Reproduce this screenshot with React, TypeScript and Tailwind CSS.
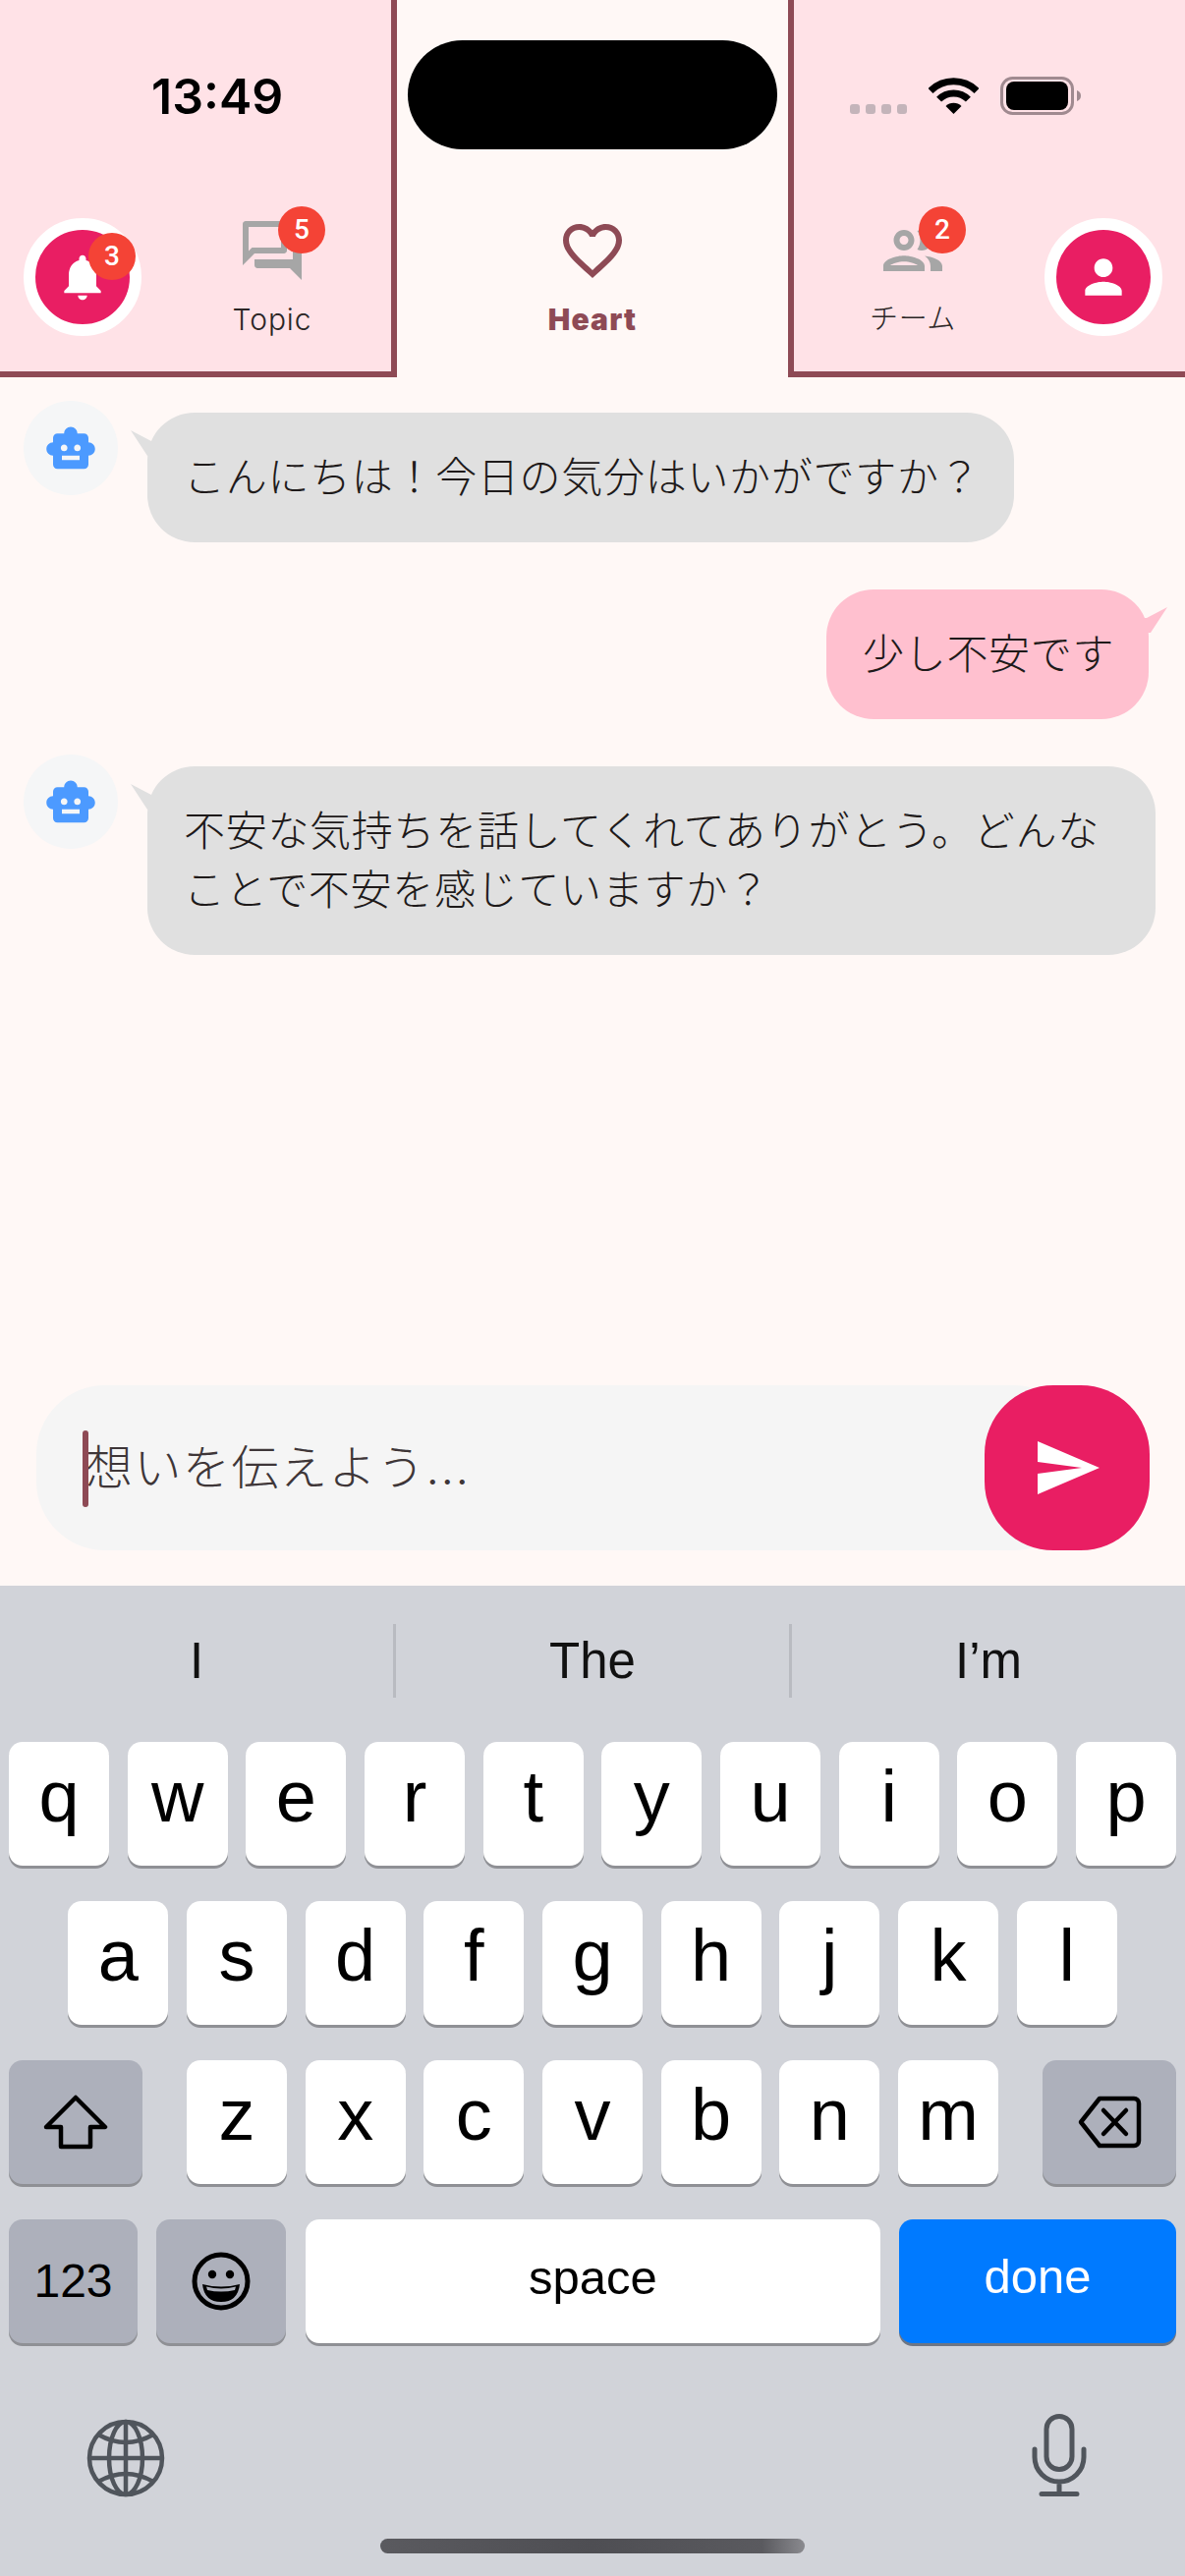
import React from "react";

const CJK = "font-['Inter','Noto_Sans_CJK_JP',sans-serif]";

function Mi({ d, size, color, className = "" }: { d: string; size: number; color: string; className?: string }) {
  return (
    <svg width={size} height={size} viewBox="0 0 24 24" fill={color} className={className}>
      <path d={d} />
    </svg>
  );
}

const P = {
  forum: "M15 4v7H5.17l-.59.59-.58.58V4h11m1-2H3c-.55 0-1 .45-1 1v14l4-4h10c.55 0 1-.45 1-1V3c0-.55-.45-1-1-1zm5 4h-2v9H6v2c0 .55.45 1 1 1h11l4 4V7c0-.55-.45-1-1-1z",
  heart: "M16.5 3c-1.74 0-3.41.81-4.5 2.09C10.91 3.81 9.24 3 7.5 3 4.42 3 2 5.42 2 8.5c0 3.78 3.4 6.86 8.55 11.54L12 21.35l1.45-1.32C18.6 15.36 22 12.28 22 8.5 22 5.42 19.58 3 16.5 3zm-4.4 15.55l-.1.1-.1-.1C7.14 14.24 4 11.39 4 8.5 4 6.5 5.5 5 7.5 5c1.54 0 3.04.99 3.57 2.36h1.87C13.46 5.99 14.96 5 16.5 5c2 0 3.5 1.5 3.5 3.5 0 2.89-3.14 5.74-7.9 10.05z",
  group: "M9 13.75c-2.34 0-7 1.17-7 3.5V19h14v-1.75c0-2.33-4.66-3.5-7-3.5zM4.34 17c.84-.58 2.87-1.25 4.66-1.25s3.82.67 4.66 1.25H4.34zM9 12c1.93 0 3.5-1.57 3.5-3.5S10.93 5 9 5 5.5 6.57 5.5 8.5 7.07 12 9 12zm0-5c.83 0 1.5.67 1.5 1.5S9.83 10 9 10s-1.5-.67-1.5-1.5S8.17 7 9 7zm7.04 6.81c1.16.84 1.96 1.96 1.96 3.44V19h4v-1.75c0-2.02-3.5-3.17-5.96-3.44zM15 12c1.93 0 3.5-1.57 3.5-3.5S16.93 5 15 5c-.54 0-1.04.13-1.5.35.63.89 1 1.98 1 3.15s-.37 2.26-1 3.15c.46.22.96.35 1.5.35z",
  bell: "M12 22c1.1 0 2-.9 2-2h-4c0 1.1.89 2 2 2zm6-6v-5c0-3.07-1.64-5.64-4.5-6.32V4c0-.83-.67-1.5-1.5-1.5s-1.5.67-1.5 1.5v.68C7.63 5.36 6 7.92 6 11v5l-2 2v1h16v-1l-2-2z",
  person: "M12 12c2.21 0 4-1.79 4-4s-1.79-4-4-4-4 1.79-4 4 1.79 4 4 4zm0 2c-2.67 0-8 1.34-8 4v2h16v-2c0-2.66-5.33-4-8-4z",
  robot: "M20 9V7c0-1.1-.9-2-2-2h-3c0-1.66-1.34-3-3-3S9 3.34 9 5H6c-1.1 0-2 .9-2 2v2c-1.66 0-3 1.34-3 3s1.34 3 3 3v4c0 1.1.9 2 2 2h12c1.1 0 2-.9 2-2v-4c1.66 0 3-1.34 3-3s-1.34-3-3-3zM7.5 11.5c0-.83.67-1.5 1.5-1.5s1.5.67 1.5 1.5S9.83 13 9 13s-1.5-.67-1.5-1.5zM16 17H8v-2h8v2zm-1-4c-.83 0-1.5-.67-1.5-1.5S14.17 10 15 10s1.5.67 1.5 1.5S15.83 13 15 13z",
  send: "M2.01 21L23 12 2.01 3 2 10l15 2-15 2z",
};

function Badge({ n, className }: { n: number; className: string }) {
  return (
    <div className={`absolute w-[48px] h-[48px] rounded-full bg-[#F44336] text-white flex items-center justify-center text-[28px] font-medium font-['Roboto',sans-serif] ${className}`}>
      {n}
    </div>
  );
}

function Round({ d, children }: { d: string; children?: React.ReactNode }) {
  return (
    <div className="relative w-[120px] h-[120px] rounded-full border-[12px] border-white bg-[#E91E63] flex items-center justify-center shrink-0">
      <Mi d={d} size={56} color="#fff" />
      {children}
    </div>
  );
}

function Avatar() {
  return (
    <div className="w-[96px] h-[96px] rounded-full bg-[#F5F6F7] flex items-center justify-center shrink-0">
      <Mi d={P.robot} size={54} color="#4C9AFF" className="mt-[2px]" />
    </div>
  );
}

function BotMessage({ text, width, className = "" }: { text: string; width: string; className?: string }) {
  return (
    <div className={`flex items-start pl-[24px] ${className}`}>
      <Avatar />
      <div className={`relative mt-[12px] ml-[30px] pl-[37px] pr-[30px] py-[36px] rounded-[48px] bg-[#E0E0E0] text-[42px] leading-[60px] tracking-[0.7px] text-[#1E1A1A] font-light ${width}`}>
        <svg width="30" height="30" viewBox="0 0 30 30" className="absolute left-[-17px] top-[17px]">
          <polygon points="0,1 21,12 30,12 30,27 17,27" fill="#E0E0E0" />
        </svg>
        {text}
      </div>
    </div>
  );
}

function Key({ label, className = "", text = "text-[74px] pb-[16px]" }: { label: React.ReactNode; className?: string; text?: string }) {
  return (
    <div className={`h-[126px] rounded-[14px] bg-white shadow-[0_3px_0_#8F9095] flex items-center justify-center text-black ${text} ${className}`}>
      {label}
    </div>
  );
}

function Letters({ keys, className = "" }: { keys: string; className?: string }) {
  return (
    <div className={`flex justify-center gap-[18.67px] ${className}`}>
      {keys.split("").map((k) => (
        <Key key={k} label={k} className="w-[102px]" />
      ))}
    </div>
  );
}

export default function App() {
  return (
    <div className={`relative w-[1206px] h-[2622px] bg-[#FFF8F6] flex flex-col overflow-hidden ${CJK}`}>
      {/* dynamic island */}
      <div className="absolute left-[415px] top-[41px] w-[376px] h-[111px] rounded-[56px] bg-black" />

      {/* header */}
      <header className="flex h-[384px] shrink-0">
        <div className="w-[404px] bg-[#FFE2E7] border-r-[6px] border-b-[6px] border-[#8E4A55]">
          <div className="h-[219px] pt-[74px] pl-[154px] text-[50px] leading-[48px] font-semibold text-black">13:49</div>
          <div className="flex items-start">
            <div className="ml-[24px] mt-[3px]">
              <Round d={P.bell}>
                <Badge n={3} className="left-[54px] top-[3px]" />
              </Round>
            </div>
            <div className="ml-[97px] w-[72px] flex flex-col items-center">
              <div className="relative w-[72px] h-[72px]">
                <Mi d={P.forum} size={72} color="#A6A6A6" />
                <Badge n={5} className="left-[42px] top-[-9px]" />
              </div>
              <div className="mt-[14px] text-[30px] leading-[40px] whitespace-nowrap text-[#2B2626] font-light tracking-[0.9px]">Topic</div>
            </div>
          </div>
        </div>

        <div className="flex-1 pt-[219px] flex flex-col items-center">
          <Mi d={P.heart} size={72} color="#8E4A55" />
          <div className="mt-[14px] text-[30px] leading-[40px] font-black text-[#8E4A55] tracking-[1.2px]">Heart</div>
        </div>

        <div className="w-[404px] bg-[#FFE2E7] border-l-[6px] border-b-[6px] border-[#8E4A55]">
          <div className="h-[219px] flex items-start">
            <div className="ml-[57px] mt-[106px] flex gap-[6px]">
              {[0, 1, 2, 3].map((i) => (
                <div key={i} className="w-[10px] h-[10px] rounded-[3px] bg-[#C4B4BA]" />
              ))}
            </div>
            <svg width="51" height="37" viewBox="0 0 51 37" className="ml-[22px] mt-[79px]">
              <g fill="none" stroke="#000" strokeWidth="7">
                <path d="M2 13.5 A33.5 33.5 0 0 1 49 13.5" />
                <path d="M10.6 22.1 A21 21 0 0 1 40.4 22.1" />
              </g>
              <path d="M25.5 37 L17.5 29 A11.3 11.3 0 0 1 33.5 29 Z" fill="#000" />
            </svg>
            <svg width="82" height="39" viewBox="0 0 82 39" className="ml-[22px] mt-[78px]">
              <rect x="1.5" y="1.5" width="72" height="36" rx="11" fill="none" stroke="#A08A90" strokeWidth="3" />
              <rect x="6" y="5" width="63" height="29" rx="8" fill="#000" />
              <path d="M78 14 C81 15 82 17 82 19.5 C82 22 81 24 78 25 Z" fill="#A08A90" />
            </svg>
          </div>
          <div className="flex items-start">
            <div className="ml-[85px] w-[72px] flex flex-col items-center">
              <div className="relative w-[72px] h-[72px]">
                <Mi d={P.group} size={72} color="#A6A6A6" />
                <Badge n={2} className="left-[42px] top-[-9px]" />
              </div>
              <div className="mt-[14px] text-[29px] leading-[40px] whitespace-nowrap text-[#2B2626] font-light tracking-[0.6px]">チーム</div>
            </div>
            <div className="ml-[98px] mt-[3px]">
              <Round d={P.person} />
            </div>
          </div>
        </div>
      </header>

      {/* messages */}
      <main className="flex-1 pt-[24px]">
        <BotMessage text="こんにちは！今日の気分はいかがですか？" width="w-[882px]" />
        <div className="flex justify-end pr-[37px] mt-[48px]">
          <div className="relative pl-[37px] py-[36px] rounded-[48px] bg-[#FFC0CF] text-[42px] leading-[60px] tracking-[0.7px] text-[#1E1A1A] font-light w-[328px] whitespace-nowrap">
            <svg width="30" height="30" viewBox="0 0 30 30" className="absolute right-[-19px] top-[17px]">
              <polygon points="30,1 9,12 0,12 0,27 13,27" fill="#FFC0CF" />
            </svg>
            少し不安です
          </div>
        </div>
        <BotMessage text="不安な気持ちを話してくれてありがとう。どんなことで不安を感じていますか？" width="w-[1026px]" className="mt-[36px]" />
      </main>

      {/* input */}
      <div className="flex pl-[37px] pb-[36px] shrink-0">
        <div className="relative w-[1064px] h-[168px] rounded-[70px] bg-[#F5F5F5] flex items-center pl-[50px]">
          <div className="absolute left-[47px] top-[46px] w-[6px] h-[78px] rounded-full bg-[#8E4A55]" />
          <span className="text-[48px] tracking-[1.5px] text-[#3E3638] font-light">想いを伝えよう...</span>
        </div>
        <button className="relative -ml-[99px] w-[168px] h-[168px] rounded-[70px] bg-[#E91E63] flex items-center justify-center">
          <Mi d={P.send} size={72} color="#fff" />
        </button>
      </div>

      {/* keyboard */}
      <div className="relative h-[1008px] shrink-0 bg-[#D1D3D9] font-['Liberation_Sans',sans-serif]">
        <div className="flex h-[159px] items-start pt-[39px]">
          {["I", "The", "I’m"].map((w, i) => (
            <div key={w} className={`flex-1 h-[75px] flex items-center justify-center pt-[2px] text-[51px] text-[#111] ${i < 2 ? "border-r-[3px] border-[#B9BBC1]" : ""}`}>
              {w}
            </div>
          ))}
        </div>
        <div className="flex flex-col gap-[36px]">
          <Letters keys="qwertyuiop" />
          <Letters keys="asdfghjkl" />
          <div className="flex justify-between px-[9px]">
            <Key
              text=""
              className="w-[136px] !bg-[#ADB0BB]"
              label={
                <svg width="66" height="56" viewBox="0 0 66 56" fill="none" stroke="#000" strokeWidth="4.5" strokeLinejoin="round">
                  <path d="M33 3 L63 33 H48 V53 H18 V33 H3 Z" />
                </svg>
              }
            />
            <Letters keys="zxcvbnm" />
            <Key
              text=""
              className="w-[136px] !bg-[#ADB0BB]"
              label={
                <svg width="65" height="54" viewBox="0 0 65 54" fill="none" stroke="#000" strokeWidth="4.5" strokeLinejoin="round" strokeLinecap="round">
                  <path d="M22 3 H57 a5 5 0 0 1 5 5 V46 a5 5 0 0 1 -5 5 H22 L3 27 Z" />
                  <path d="M26 15 L49 39 M49 15 L26 39" />
                </svg>
              }
            />
          </div>
          <div className="flex px-[9px]">
            <Key label="123" text="text-[48px]" className="w-[131px] !bg-[#ADB0BB]" />
            <Key
              text=""
              className="w-[132px] ml-[19px] !bg-[#ADB0BB]"
              label={
                <svg width="60" height="60" viewBox="0 0 60 60">
                  <circle cx="30" cy="30" r="27" fill="none" stroke="#000" strokeWidth="5" />
                  <circle cx="21" cy="23" r="4.2" fill="#000" />
                  <circle cx="39" cy="23" r="4.2" fill="#000" />
                  <path d="M11 33 Q30 38 49 33 Q47 51 30 51 Q13 51 11 33Z" fill="#000" />
                  <path d="M15 35.5 Q30 39.5 45 35.5 L44 39 Q30 42 16 39 Z" fill="#ADB0BB" />
                </svg>
              }
            />
            <Key label="space" text="text-[49px] pb-[6px]" className="w-[585px] ml-[20px]" />
            <Key label="done" text="text-[49px] pb-[8px]" className="w-[282px] ml-[19px] !bg-[#007AFF] !text-white !shadow-[0_3px_0_#6E7684]" />
          </div>
        </div>
        <div className="flex justify-between items-start pl-[88px] pr-[100px] mt-[72px]">
          <svg width="80" height="80" viewBox="0 0 80 80" fill="none" stroke="#50555C" strokeWidth="4.5" className="mt-[5px]">
            <circle cx="40" cy="40" r="37" />
            <ellipse cx="40" cy="40" rx="17" ry="37" />
            <path d="M40 3 V77 M3 40 H77" />
            <path d="M12 16 Q40 32 68 16 M12 64 Q40 48 68 64" />
          </svg>
          <svg width="56" height="84" viewBox="0 0 56 84" fill="none" stroke="#50555C" strokeWidth="5" strokeLinecap="round">
            <rect x="15" y="2.5" width="26" height="54" rx="13" />
            <path d="M3 36 V44 A25 25 0 0 0 53 44 V36 M28 69 V81 M10 81.5 H46" />
          </svg>
        </div>
        <div className="mt-[42px] ml-[387px] w-[432px] h-[15px] rounded-full bg-[linear-gradient(90deg,#5A5A5F_0%,#4E4E53_50%,#5A5A5F_90%,#8A8A8F_100%)]" />
      </div>
    </div>
  );
}
